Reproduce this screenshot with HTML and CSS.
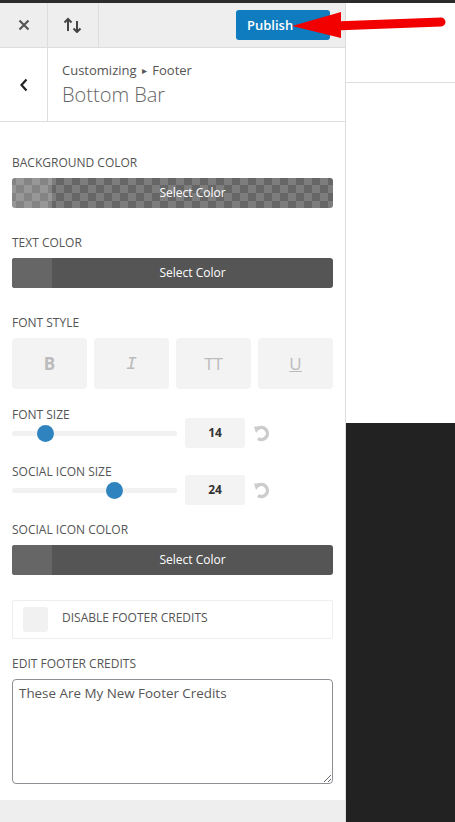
FILE: index.html
```html
<!DOCTYPE html>
<html lang="en">
<head>
    <meta charset="UTF-8">
    <meta name="viewport" content="width=device-width, initial-scale=1.0">
    <title>Customizing Footer - Bottom Bar</title>
    <link rel="stylesheet" href="styles.css">
</head>
<body>
    <div class="topline"></div>
    <div class="app">
        <aside class="sidebar">
            <div class="toolbar">
                <button class="tool-btn close-btn" aria-label="Close">
                    <svg width="12" height="12" viewBox="0 0 12 12"><path d="M1.5 1.5 L10.5 10.5 M10.5 1.5 L1.5 10.5" stroke="#555" stroke-width="2.2" fill="none"/></svg>
                </button>
                <button class="tool-btn sort-btn" aria-label="Reorder">
                    <svg width="20" height="16" viewBox="0 0 20 16"><path d="M5 14 V2 M1.5 5.5 L5 2 L8.5 5.5" stroke="#444" stroke-width="2" fill="none"/><path d="M14 4 V15 M10.5 11.5 L14 15 L17.5 11.5" stroke="#444" stroke-width="2" fill="none"/></svg>
                </button>
                <button class="publish-btn">Publish</button>
            </div>

            <div class="section-head">
                <button class="back-btn" aria-label="Back">
                    <svg width="10" height="14" viewBox="0 0 10 14"><path d="M7.5 1.5 L2.5 7 L7.5 12.5" stroke="#222" stroke-width="2.2" fill="none"/></svg>
                </button>
                <div class="section-title">
                    <span class="crumb">Customizing <span class="crumb-sep">&#9656;</span> Footer</span>
                    <h2>Bottom Bar</h2>
                </div>
            </div>

            <div class="controls">
                <div class="control">
                    <span class="label">Background Color</span>
                    <button class="color-btn transparent"><span class="swatch"></span><span class="color-text">Select Color</span></button>
                </div>

                <div class="control">
                    <span class="label">Text Color</span>
                    <button class="color-btn"><span class="swatch"></span><span class="color-text">Select Color</span></button>
                </div>

                <div class="control control-tight">
                    <span class="label">Font Style</span>
                    <div class="style-btns">
                        <button class="style-btn bold">B</button>
                        <button class="style-btn italic">I</button>
                        <button class="style-btn">TT</button>
                        <button class="style-btn underline">U</button>
                    </div>
                </div>

                <div class="control range">
                    <span class="label">Font Size</span>
                    <div class="track"><span class="thumb" style="left: 20.6%"></span></div>
                    <div class="num-box">14</div>
                    <button class="reset-btn" aria-label="Reset">
                        <svg width="18" height="18" viewBox="0 0 18 18"><path d="M4.5 5 A6 6 0 1 1 5 14.5" stroke="#ccc" stroke-width="3.4" fill="none"/><path d="M1 2.5 L8.5 2.5 L3 9 Z" fill="#ccc"/></svg>
                    </button>
                </div>

                <div class="control range">
                    <span class="label">Social Icon Size</span>
                    <div class="track"><span class="thumb" style="left: 62%"></span></div>
                    <div class="num-box">24</div>
                    <button class="reset-btn" aria-label="Reset">
                        <svg width="18" height="18" viewBox="0 0 18 18"><path d="M4.5 5 A6 6 0 1 1 5 14.5" stroke="#ccc" stroke-width="3.4" fill="none"/><path d="M1 2.5 L8.5 2.5 L3 9 Z" fill="#ccc"/></svg>
                    </button>
                </div>

                <div class="control control-wide">
                    <span class="label">Social Icon Color</span>
                    <button class="color-btn"><span class="swatch"></span><span class="color-text">Select Color</span></button>
                </div>

                <div class="control control-check">
                    <label class="check-row">
                        <span class="check-box"></span>
                        <span class="check-text">Disable Footer Credits</span>
                    </label>
                </div>

                <div class="control control-last">
                    <span class="label">Edit Footer Credits</span>
                    <textarea class="credits">These Are My New Footer Credits</textarea>
                </div>
            </div>

            <div class="footer-bar"></div>
        </aside>

        <div class="preview">
            <div class="preview-top"></div>
            <div class="preview-body"></div>
            <div class="preview-dark"></div>
        </div>
    </div>

    <svg class="arrow" width="455" height="50" viewBox="0 0 455 50">
        <path d="M334 26 L441 22" stroke="#f20000" stroke-width="9" stroke-linecap="round"/>
        <path d="M292 26 L341 12 L341 38 Z" fill="#f20000"/>
    </svg>
</body>
</html>
```

FILE: styles.css
```css
*{
    box-sizing: border-box;
}
body{
    margin: 0;
    font-family: "Open Sans", "Liberation Sans", sans-serif;
    color: #555;
    height: 822px;
    overflow: hidden;
    background: #fff;
}
button{
    font-family: inherit;
    border: none;
    padding: 0;
    cursor: pointer;
}
.topline{
    height: 3px;
    background: #2b2b2b;
}
.app{
    display: flex;
    height: 819px;
}

/* sidebar */
.sidebar{
    width: 346px;
    border-right: 1px solid #ddd;
    display: flex;
    flex-direction: column;
    background: #fff;
}
.toolbar{
    display: flex;
    align-items: center;
    height: 45px;
    background: #eee;
    border-bottom: 1px solid #ddd;
}
.tool-btn{
    height: 44px;
    background: transparent;
    border-right: 1px solid #ddd;
    display: flex;
    align-items: center;
    justify-content: center;
}
.close-btn{
    width: 48px;
}
.sort-btn{
    width: 51px;
}
.publish-btn{
    margin-left: auto;
    margin-right: 15px;
    width: 94px;
    height: 30px;
    background: #0f7cc0;
    color: #fff;
    font-size: 13px;
    font-weight: 600;
    text-align: left;
    padding-left: 11px;
    border-radius: 3px;
}
.section-head{
    display: flex;
    height: 74px;
    border-bottom: 1px solid #ddd;
}
.back-btn{
    width: 48px;
    background: #fff;
    border-right: 1px solid #ddd;
    display: flex;
    align-items: center;
    justify-content: center;
}
.section-title{
    padding: 13px 0 0 14px;
}
.crumb{
    display: block;
    font-size: 13px;
    line-height: 18px;
    color: #555;
}
.crumb-sep{
    font-size: 10px;
    padding: 0 2px;
    vertical-align: 1px;
}
.section-title h2{
    margin: 2px 0 0;
    font-size: 20px;
    font-weight: 300;
    line-height: 28px;
    color: #666;
}

/* controls */
.controls{
    padding: 33px 12px 16px;
}
.control{
    margin-bottom: 27px;
}
.control-tight{
    margin-bottom: 18px;
}
.control-wide{
    margin-bottom: 25px;
}
.control-check{
    margin-bottom: 17px;
}
.control-last{
    margin-bottom: 0;
}
.label{
    display: block;
    font-size: 12px;
    line-height: 16px;
    text-transform: uppercase;
    color: #555;
    margin-bottom: 7px;
}
.color-btn{
    display: flex;
    width: 100%;
    height: 30px;
    border-radius: 3px;
    overflow: hidden;
    background: #555;
}
.color-btn .swatch{
    width: 40px;
    background: #666;
}
.color-btn .color-text{
    flex: 1;
    line-height: 30px;
    color: #fff;
    font-size: 12px;
    text-align: center;
}
.color-btn.transparent{
    background-color: #666;
    background-image: conic-gradient(#7d7d7d 25%, #666 0 50%, #7d7d7d 0 75%, #666 0);
    background-size: 16px 16px;
    background-position: -4px -1px;
}
.color-btn.transparent .swatch{
    background: rgba(255, 255, 255, 0.2);
}
.style-btns{
    display: flex;
    gap: 7px;
}
.style-btn{
    flex: 1;
    height: 51px;
    background: #f3f3f3;
    border-radius: 4px;
    color: #bbb;
    font-size: 17px;
}
.style-btn.bold{
    font-weight: 700;
}
.style-btn.italic{
    font-style: italic;
    font-family: "Liberation Mono", monospace;
    font-size: 18px;
}
.style-btn.underline{
    text-decoration: underline;
}

/* range */
.control.range{
    display: grid;
    grid-template-columns: 165px 60px 1fr;
    grid-template-rows: 16px 20px;
    column-gap: 8px;
    margin-bottom: 21px;
}
.control.range .label{
    grid-column: 1;
    margin: 0;
}
.track{
    grid-column: 1;
    grid-row: 2;
    align-self: center;
    position: relative;
    height: 5px;
    background: #f1f1f1;
    border-radius: 3px;
}
.thumb{
    position: absolute;
    top: 50%;
    width: 17px;
    height: 17px;
    margin: -8.5px 0 0 -8.5px;
    border-radius: 50%;
    background: #2f84bf;
}
.num-box{
    grid-column: 2;
    grid-row: 2;
    align-self: center;
    height: 30px;
    line-height: 30px;
    background: #f3f3f3;
    border-radius: 3px;
    text-align: center;
    font-size: 12px;
    font-weight: 700;
    color: #333;
}
.reset-btn{
    grid-column: 3;
    grid-row: 2;
    align-self: center;
    justify-self: start;
    background: transparent;
    display: flex;
}
.control.range + .control.range{
    margin-bottom: 22px;
}

/* checkbox */
.check-row{
    display: flex;
    align-items: center;
    gap: 14px;
    padding: 6px 10px;
    border: 1px solid #eee;
    border-radius: 2px;
}
.check-box{
    width: 25px;
    height: 25px;
    background: #f1f1f1;
    border-radius: 3px;
}
.check-text{
    font-size: 12px;
    line-height: 16px;
    margin-top: -3px;
    text-transform: uppercase;
    color: #555;
}
.credits{
    display: block;
    width: 100%;
    height: 105px;
    border: 1px solid #8c8f94;
    border-radius: 4px;
    padding: 2px 6px;
    font-family: "Open Sans", "Liberation Sans", sans-serif;
    font-size: 13.4px;
    line-height: 22px;
    color: #555;
    outline: none;
}
.footer-bar{
    flex: 1;
    background: #eee;
}

/* preview */
.preview{
    flex: 1;
    display: flex;
    flex-direction: column;
}
.preview-top{
    height: 80px;
    border-bottom: 1px solid #ddd;
}
.preview-body{
    flex: 1;
}
.preview-dark{
    height: 399px;
    background: #222;
}
.arrow{
    position: absolute;
    top: 0;
    left: 0;
    pointer-events: none;
}
```
